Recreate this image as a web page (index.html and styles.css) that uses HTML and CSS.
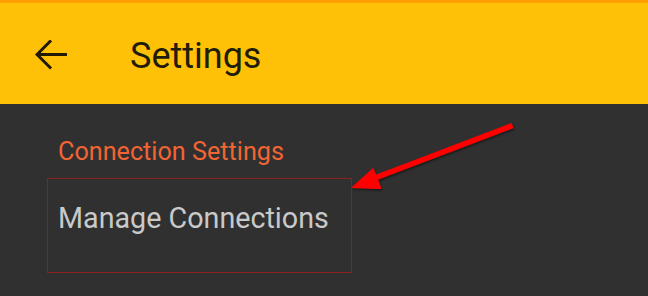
FILE: index.html
```html
<!DOCTYPE html>
<html>
<head>
<meta charset="utf-8">
<link rel="stylesheet" href="styles.css">
</head>
<body>
<div class="app">
  <header class="toolbar">
    <svg class="back" width="32" height="32" viewBox="0 0 32 32">
      <path d="M3 14.5H31M15 1.5L2 14.5L15 27.5" fill="none" stroke="#211a05" stroke-width="3" stroke-linecap="square"/>
    </svg>
    <h1 class="title">Settings</h1>
  </header>
  <main class="content">
    <h2 class="section">Connection Settings</h2>
    <div class="item">Manage Connections</div>
  </main>
  <svg class="annot" width="648" height="296" viewBox="0 0 648 296">
    <defs>
      <filter id="sh" x="-10%" y="-10%" width="120%" height="120%">
        <feDropShadow dx="1" dy="1.5" stdDeviation="1" flood-color="#000" flood-opacity="0.5"/>
      </filter>
    </defs>
    <g filter="url(#sh)" fill="#ff0000" stroke="#ff0000">
      <line x1="510" y1="126.5" x2="372" y2="179" stroke-width="5.5" stroke-linecap="square"/>
      <polygon points="352,187.5 373,168.5 381,188.5" stroke-width="1" stroke-linejoin="round"/>
    </g>
  </svg>
</div>
</body>
</html>
```
FILE: styles.css
```css
html, body {
  margin: 0;
  padding: 0;
}
body {
  background: #303030;
  font-family: Roboto, "Noto Sans", sans-serif;
}
.app {
  position: relative;
  width: 648px;
  height: 296px;
  overflow: hidden;
  background: #303030;
}
.toolbar {
  box-sizing: border-box;
  height: 104px;
  background: #ffc107;
  border-top: 3px solid #ffa000;
  display: flex;
  align-items: center;
  padding: 4px 0 0 35px;
}
.back {
  display: block;
  flex: none;
}
.title {
  margin: 0 0 0 63px;
  font-size: 36px;
  line-height: 42px;
  font-weight: 400;
  color: #221c0a;
}
.content {
  display: flex;
  flex-direction: column;
  align-items: flex-start;
  padding-top: 33px;
}
.section {
  margin: 0 0 0 58px;
  font-size: 25.2px;
  line-height: 30px;
  font-weight: 400;
  color: #f26433;
}
.item {
  box-sizing: border-box;
  margin: 11px 0 0 47px;
  width: 305px;
  height: 95px;
  border: 1px solid #8a2020;
  padding: 22px 0 0 10px;
  font-size: 28.7px;
  line-height: 34px;
  color: #c9c9c9;
}
.annot {
  position: absolute;
  left: 0;
  top: 0;
  pointer-events: none;
}
```
